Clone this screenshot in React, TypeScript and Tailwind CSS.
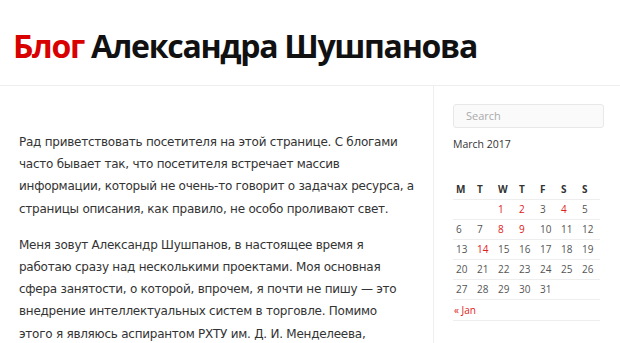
import React from "react";

const weeks: (number | null)[][] = [
  [null, null, 1, 2, 3, 4, 5],
  [6, 7, 8, 9, 10, 11, 12],
  [13, 14, 15, 16, 17, 18, 19],
  [20, 21, 22, 23, 24, 25, 26],
  [27, 28, 29, 30, 31, null, null],
];
const linked = new Set([1, 2, 4, 8, 9, 14]);

export default function App() {
  return (
    <div className="w-[620px] h-[343px] overflow-hidden bg-white">
      <header className="h-[86px] border-b border-[#eeeeee] pl-[13px] pt-[26px]">
        <h1
          className="text-[32px] leading-[40px] font-bold tracking-[-1.3px] text-[#111]"
          style={{ fontFamily: '"Open Sans", sans-serif' }}
        >
          <span className="text-[#d90000]">Блог</span> Александра Шушпанова
        </h1>
      </header>
      <div className="flex">
        <main
          className="w-[434px] shrink-0 border-r border-[#eeeeee] pl-[19px] pr-[16px] pt-[45px] text-[12px] tracking-[-0.25px] leading-[22.2px] text-[#333]"
          style={{ fontFamily: '"DejaVu Sans", sans-serif' }}
        >
          <p>
            Рад приветствовать посетителя на этой странице. С блогами часто бывает так, что посетителя встречает массив информации, который не очень-то говорит о задачах ресурса, а страницы описания, как правило, не особо проливают свет.
          </p>
          <p className="mt-[14px]">
            Меня зовут Александр Шушпанов, в настоящее время я
            <br />
            работаю сразу над несколькими проектами. Моя основная
            <br />
            сфера занятости, о которой, впрочем, я почти не пишу — это
            <br />
            внедрение интеллектуальных систем в торговле. Помимо
            <br />
            этого я являюсь аспирантом РХТУ им. Д. И. Менделеева,
          </p>
        </main>
        <aside
          className="pl-[19px] pt-[18px] w-[170px] text-[#333]"
          style={{ fontFamily: '"Open Sans", sans-serif' }}
        >
          <div className="w-[151px] h-[24px] rounded-[3px] border border-[#e8e8e8] bg-[#fafafa] px-[12px] flex items-center text-[11px] text-[#aaa]">
            Search
          </div>
          <div className="mt-[8px] text-[10.5px] leading-[16px]">March 2017</div>
          <table className="mt-[28px] w-[147px] text-[10px] border-collapse">
            <thead>
              <tr className="border-b border-[#eeeeee]">
                {["M", "T", "W", "T", "F", "S", "S"].map((d, i) => (
                  <th key={i} className="h-[19px] text-left pl-[3px] font-bold text-[#333]">
                    {d}
                  </th>
                ))}
              </tr>
            </thead>
            <tbody>
              {weeks.map((w, i) => (
                <tr key={i} className="border-b border-[#eeeeee]">
                  {w.map((d, j) => (
                    <td
                      key={j}
                      className={`h-[20.2px] pl-[3px] ${d && linked.has(d) ? "text-[#e02020]" : "text-[#555]"}`}
                    >
                      {d ?? ""}
                    </td>
                  ))}
                </tr>
              ))}
              <tr className="border-b border-[#eeeeee]">
                <td colSpan={7} className="h-[20.2px] pl-[1px] text-[#e02020]">
                  « Jan
                </td>
              </tr>
            </tbody>
          </table>
          <div className="mt-[22px] text-[22px] font-bold leading-[28px] text-[#222]">Свежие записи</div>
        </aside>
      </div>
    </div>
  );
}
